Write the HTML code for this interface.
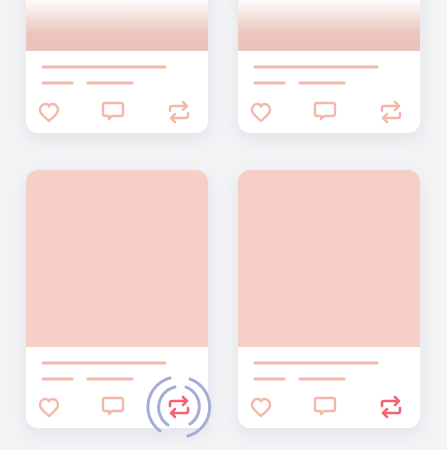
<!DOCTYPE html>
<html><head><style>
html,body{margin:0;padding:0}
body{width:447px;height:450px;background:#f3f4f6;position:relative;overflow:hidden;font-family:"Liberation Sans",sans-serif}
.card{position:absolute;width:182px;background:#fff;border-radius:12px;overflow:hidden;box-shadow:0 6px 18px rgba(120,130,150,.15)}
.img{position:absolute;left:0;top:0;width:100%}
.ln{position:absolute;height:3px;border-radius:2px;background:#f2b8aa}
svg.ic{position:absolute;overflow:visible}
</style></head><body>

<!-- top cards -->
<div class="card" style="left:26px;top:-20px;height:153px">
  <div class="img" style="height:71px;background:linear-gradient(#fff 0px,#fff 18px,#ebc4bb 55px)"></div>
</div>
<div class="card" style="left:238px;top:-20px;height:153px">
  <div class="img" style="height:71px;background:linear-gradient(#fff 0px,#fff 18px,#ebc4bb 55px)"></div>
</div>
<div class="card" style="left:26px;top:170px;height:258px">
  <div class="img" style="height:177px;background:#f6d0c7"></div>
</div>
<div class="card" style="left:238px;top:170px;height:258px">
  <div class="img" style="height:177px;background:#f5cfc6"></div>
</div>

<svg width="447" height="450" style="position:absolute;left:0;top:0" fill="none" stroke-linecap="round" stroke-linejoin="round">
  <g stroke="#f2b8aa" stroke-width="3">
    <line x1="43" y1="67" x2="165" y2="67"/><line x1="43" y1="83" x2="72" y2="83"/><line x1="88" y1="83" x2="132" y2="83"/>
    <line x1="255" y1="67" x2="377" y2="67"/><line x1="255" y1="83" x2="284" y2="83"/><line x1="300" y1="83" x2="344" y2="83"/>
    <line x1="43" y1="363" x2="165" y2="363"/><line x1="43" y1="379" x2="72" y2="379"/><line x1="88" y1="379" x2="132" y2="379"/>
    <line x1="255" y1="363" x2="377" y2="363"/><line x1="255" y1="379" x2="284" y2="379"/><line x1="300" y1="379" x2="344" y2="379"/>
  </g>
  <defs>
    <g id="heart"><path d="M0 8 C-3 5 -9 1 -9 -3 C-9 -7 -6 -9 -3.5 -9 C-1.8 -9 -0.5 -8 0 -6.5 C0.5 -8 1.8 -9 3.5 -9 C6 -9 9 -7 9 -3 C9 1 3 5 0 8Z"/></g>
    <g id="cmt"><path d="M-8 -8 H8 Q10 -8 10 -6 V3 Q10 5 8 5 H-1 L-4 8 L-4 5 H-8 Q-10 5 -10 3 V-6 Q-10 -8 -8 -8Z"/></g>
    <g id="rt"><path d="M-9 -1 V-4 Q-9 -6 -7 -6 H8 M4 -10 L8 -6 L4 -2 M9 1 V4 Q9 6 7 6 H-8 M-4 2 L-8 6 L-4 10"/></g>
  </defs>
  <g stroke="#f2b8aa" stroke-width="2.4">
    <use href="#heart" x="49" y="113"/><use href="#cmt" x="113" y="111"/><use href="#rt" x="179" y="112"/>
    <use href="#heart" x="261" y="113"/><use href="#cmt" x="325" y="111"/><use href="#rt" x="391" y="112"/>
    <use href="#heart" x="49" y="408"/><use href="#cmt" x="113" y="406"/>
    <use href="#heart" x="261" y="408"/><use href="#cmt" x="325" y="406"/>
  </g>
  <g stroke="#f4616f" stroke-width="2.6">
    <use href="#rt" x="179" y="407"/><use href="#rt" x="391" y="407"/>
  </g>
  <g stroke="#a7abd8" stroke-width="3">
    <path d="M170 378 A30 30 0 0 0 160 431"/>
    <path d="M190 379 A30 30 0 0 1 188 436"/>
    <path d="M175 387 A21 21 0 0 0 168 425"/>
    <path d="M186 387 A21 21 0 0 1 190 424"/>
  </g>
</svg>
</body></html>
